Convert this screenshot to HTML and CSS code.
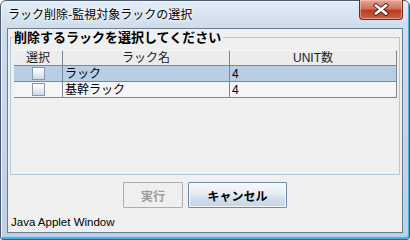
FILE: index.html
```html
<!DOCTYPE html>
<html lang="ja">
<head>
    <meta charset="UTF-8">
    <title>ラック削除-監視対象ラックの選択</title>
    <link rel="stylesheet" href="styles.css">
</head>
<body>

    <div class="window">
        <div class="titlebar">
            <span class="title">ラック削除-監視対象ラックの選択</span>
            <button class="close-btn" title="閉じる">
                <svg width="18" height="13" viewBox="0 0 18 13">
                    <path d="M4 2.5 L14 10.5 M14 2.5 L4 10.5" stroke="#4a2418" stroke-width="4.4" stroke-linecap="square" fill="none"/>
                    <path d="M4 2.5 L14 10.5 M14 2.5 L4 10.5" stroke="#ffffff" stroke-width="2.6" stroke-linecap="square" fill="none"/>
                </svg>
            </button>
        </div>

        <div class="client">
            <fieldset class="group">
                <legend>削除するラックを選択してください</legend>
                <table class="rack-table">
                    <colgroup>
                        <col class="col-check">
                        <col class="col-name">
                        <col class="col-unit">
                    </colgroup>
                    <thead>
                        <tr>
                            <th>選択</th>
                            <th>ラック名</th>
                            <th>UNIT数</th>
                        </tr>
                    </thead>
                    <tbody>
                        <tr class="selected">
                            <td class="cell-check"><span class="check"></span></td>
                            <td>ラック</td>
                            <td>4</td>
                        </tr>
                        <tr>
                            <td class="cell-check"><span class="check"></span></td>
                            <td>基幹ラック</td>
                            <td>4</td>
                        </tr>
                    </tbody>
                </table>
            </fieldset>

            <div class="buttons">
                <button class="btn btn-run" disabled>実行</button>
                <button class="btn btn-cancel">キャンセル</button>
            </div>

            <div class="status">Java Applet Window</div>
        </div>
    </div>

</body>
</html>
```

FILE: styles.css
```css
/* Reset */
* {
    margin: 0;
    padding: 0;
    box-sizing: border-box;
}

body {
    width: 410px;
    height: 240px;
    overflow: hidden;
    font-family: "Liberation Sans", "Noto Sans CJK JP", sans-serif;
    font-size: 12px;
    color: #000;
    background: #ffffff;
}

/* Window frame (Vista basic) */
.window {
    width: 410px;
    height: 240px;
    display: flex;
    flex-direction: column;
    border: 1px solid #4b5c70;
    border-radius: 6px 6px 3px 3px;
    background: linear-gradient(to bottom, #e4edf6 0, #cedcec 26px, #bdd0e4 100%);
    box-shadow: inset 1px 1px 0 #eef4fa, inset -1px -2px 0 #3cb6ea;
}

.titlebar {
    height: 27px;
    display: flex;
    justify-content: space-between;
    align-items: flex-start;
    flex-shrink: 0;
}

.title {
    padding-left: 7px;
    line-height: 26px;
    font-family: "Noto Sans CJK JP", sans-serif;
    font-size: 12px;
    color: #000;
    text-shadow: 0 0 6px #ffffff, 0 0 3px #ffffff;
}

.close-btn {
    width: 44px;
    height: 20px;
    margin-top: -1px;
    margin-right: 6px;
    border: 1px solid #6b2a1c;
    border-top: none;
    border-radius: 0 0 4px 4px;
    background: linear-gradient(to bottom, #e4a797 0, #d2705a 45%, #bb3c22 55%, #c9614a 100%);
    box-shadow: inset 0 0 0 1px rgba(255, 210, 200, 0.5);
    display: flex;
    justify-content: center;
    align-items: center;
}

/* Client area */
.client {
    width: 396px;
    height: 205px;
    margin-left: 6px;
    flex-shrink: 0;
    display: flex;
    flex-direction: column;
    border: 1px solid #6b7d92;
    background: #f0f0f0;
}

.group {
    height: 145px;
    margin: 1px 2px 0 2px;
    padding: 0 2px 0 3px;
    border: 1px solid #b3c7dc;
    flex-shrink: 0;
}

.group legend {
    margin-left: -1px;
    padding: 0 2px 0 1px;
    font-family: "Noto Sans CJK JP", sans-serif;
    font-size: 13px;
    font-weight: bold;
    line-height: 14px;
    color: #000;
}

/* Table */
.rack-table {
    margin-top: 6px;
    width: 383px;
    table-layout: fixed;
    border-collapse: separate;
    border-spacing: 0;
}

.col-check {
    width: 49px;
}

.col-name,
.col-unit {
    width: 167px;
}

.rack-table th,
.rack-table td {
    padding: 0 2px;
    line-height: 14px;
    font-weight: normal;
    white-space: nowrap;
    border-right: 1px solid #7b8896;
    border-bottom: 1px solid #7b8896;
}

.rack-table th {
    height: 16px;
    text-align: center;
    color: #222;
    background: #ececec;
    border-top: 1px dotted #ffffff;
}

.rack-table td {
    height: 16px;
    text-align: left;
    background: #f5f5f5;
}

.rack-table tr.selected td {
    background: #b8cee5;
}

.rack-table td.cell-check {
    padding: 0;
    vertical-align: middle;
}

.check {
    display: block;
    width: 13px;
    height: 13px;
    margin: 0 auto;
    border: 1px solid #8799ad;
    background: linear-gradient(to bottom, #fdfefe 0, #eef2f6 45%, #c9d5e2 100%);
}

/* Buttons */
.buttons {
    height: 38px;
    padding-top: 7px;
    display: flex;
    justify-content: center;
    gap: 5px;
    flex-shrink: 0;
}

.btn {
    height: 26px;
    font-family: "Noto Sans CJK JP", sans-serif;
    font-size: 12px;
    font-weight: bold;
    border-radius: 1px;
}

.btn-run {
    width: 60px;
    color: #9c9c9c;
    border: 1px solid #adadad;
    background: #efefef;
}

.btn-cancel {
    width: 99px;
    color: #000;
    border: 1px solid #7189a4;
    background: linear-gradient(to bottom, #f6f8fb 0, #e8eef5 45%, #d5e1ee 60%, #c3d5e8 100%);
    box-shadow: inset 0 0 0 1px #f4f8fc;
}

/* Status bar */
.status {
    flex: 1;
    padding-left: 3px;
    padding-top: 1px;
    line-height: 17px;
    font-size: 11.5px;
    color: #000;
    background: repeating-conic-gradient(#f6f6f6 0 25%, #e9e9e9 0 50%) 0 0 / 2px 2px;
}
```
